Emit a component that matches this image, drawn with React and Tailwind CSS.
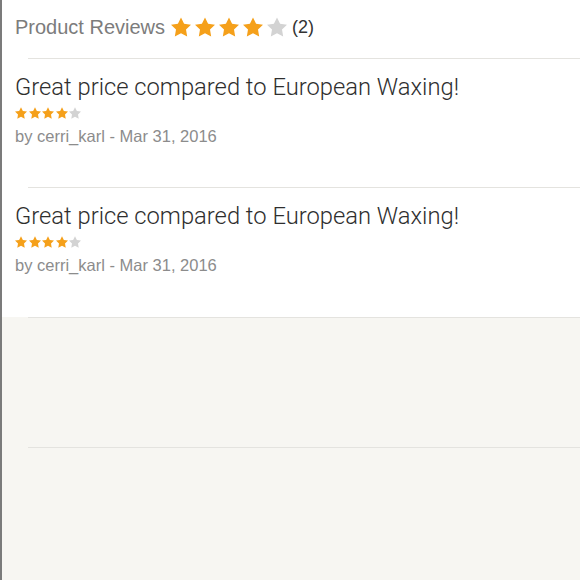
import React from "react"

const STAR = "M12 2l3.09 6.26L22 9.27l-5 4.87 1.18 6.88L12 17.77l-6.18 3.25L7 14.14 2 9.27l6.91-1.01L12 2z"

const Stars = ({ rating, size, gap }) => (
  <div className={`flex items-center ${gap}`}>
    {[1, 2, 3, 4, 5].map(i => (
      <svg key={i} viewBox="2 2 20 19.2" className={size}>
        <path d={STAR} fill={i <= rating ? "#f5a01a" : "#d3d3d3"} />
      </svg>
    ))}
  </div>
)

const reviews = [
  { title: "Great price compared to European Waxing!", rating: 4, author: "cerri_karl", date: "Mar 31, 2016", h: "h-[128px]" },
  { title: "Great price compared to European Waxing!", rating: 4, author: "cerri_karl", date: "Mar 31, 2016", h: "h-[129px]" },
]

const Divider = () => <div className="ml-[26px] h-px bg-[#e4e3df]" />

export default function App() {
  return (
    <div className="w-[580px] h-[580px] overflow-hidden bg-[#f7f6f2] border-l-2 border-[#7b7b7b] font-['Liberation_Sans',Arial,sans-serif]">
      <div className="bg-white">
        {/* header */}
        <div className="h-[58px] flex items-center pl-[13px] pb-[4px]">
          <span className="text-[20px] text-[#7c7c7c]">Product Reviews</span>
          <div className="ml-[6px]">
            <Stars rating={4} size="w-[20px] h-[20px]" gap="gap-[4px]" />
          </div>
          <span className="ml-[5px] text-[18px] text-[#333]">(2)</span>
        </div>

        {reviews.map((r, i) => (
          <div key={i}>
            <Divider />
            <div className={`${r.h} pl-[13px] pt-[14px]`}>
              <div className="text-[23.75px] leading-[28px] text-[#2e2e2e] font-['Roboto',sans-serif] font-light">{r.title}</div>
              <div className="mt-[6px]">
                <Stars rating={r.rating} size="w-[12px] h-[12px]" gap="gap-[1.5px]" />
              </div>
              <div className="mt-[7px] text-[16.5px] leading-[20px] text-[#8c8c8c]">
                by {r.author} - {r.date}
              </div>
            </div>
          </div>
        ))}
      </div>
      <Divider />
      <div className="h-[129px]" />
      <Divider />
    </div>
  )
}
